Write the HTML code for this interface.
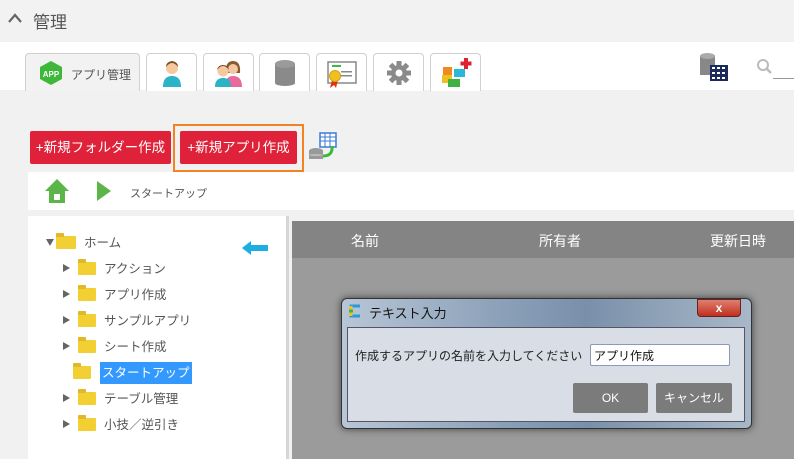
<!DOCTYPE html>
<html><head><meta charset="utf-8">
<style>
*{margin:0;padding:0;box-sizing:border-box}
body{width:794px;height:459px;overflow:hidden;background:#f1f1f1;font-family:"Liberation Sans","Noto Sans CJK JP",sans-serif;position:relative;color:#444}
.abs{position:absolute}
.tab{position:absolute;top:53px;height:38px;border:1px solid #d0d0d0;border-bottom:none;border-radius:4px 4px 0 0;background:#fff}
.btn{position:absolute;top:131px;height:33px;background:#df2239;color:#fff;font-size:13.5px;line-height:33px;text-align:center;border-radius:2px}
.tree div{position:absolute;font-size:12.5px;color:#555;height:20px;line-height:20px}
.fold{display:inline-block;width:18px;height:13px;background:#f2cf33;border-radius:1px;vertical-align:-2px;margin-right:8px;position:relative}
.fold:before{content:"";position:absolute;left:0;top:-3px;width:8px;height:4px;background:#e0b828;border-radius:1px 1px 0 0}
.tri{display:inline-block;width:0;height:0;border-left:7px solid #666;border-top:4px solid transparent;border-bottom:4px solid transparent;margin-right:8px;vertical-align:1px}
</style></head><body>
<div class="abs" style="left:0;top:0;width:794px;height:42px;background:#f2f2f2"></div>
<svg class="abs" style="left:7px;top:12px" width="16" height="12"><path d="M2 10 L8 3 L14 10" stroke="#666" stroke-width="2.2" fill="none"/></svg>
<div class="abs" style="left:33px;top:8px;font-size:17px;color:#555">管理</div>
<div class="abs" style="left:0;top:42px;width:794px;height:48px;background:#fff"></div>
<div class="tab" style="left:25px;width:115px;background:#f2f2f2"></div>
<svg class="abs" style="left:39px;top:60px" width="24" height="26"><polygon points="12,1 23,7 23,19 12,25 1,19 1,7" fill="#3db83a"/><text x="12" y="17" font-size="8" font-weight="bold" fill="#fff" text-anchor="middle" font-family="Liberation Sans">APP</text></svg>
<div class="abs" style="left:71px;top:66px;font-size:12px;color:#555">アプリ管理</div>
<div class="tab" style="left:146px;width:51px"></div>
<svg class="abs" style="left:160px;top:59px" width="24" height="28"><circle cx="12" cy="9" r="6" fill="#f6c8a0"/><path d="M6 8 Q12 0 18 8 Q18 3 12 2 Q6 3 6 8Z" fill="#7a4a20"/><path d="M3 28 Q3 17 12 17 Q21 17 21 28Z" fill="#2bb3c8"/></svg>
<div class="tab" style="left:203px;width:51px"></div>
<svg class="abs" style="left:213px;top:59px" width="32" height="28"><path d="M13 14 Q12 2 20 2 Q28 2 27 14Z" fill="#8a5a30"/><circle cx="20" cy="10" r="5" fill="#f6c8a0"/><path d="M12 28 Q12 17 20 17 Q29 17 29 28Z" fill="#e86a9a"/><circle cx="10" cy="12" r="5.5" fill="#f6c8a0"/><path d="M4 11 Q10 3 16 11 Q15 6 10 6 Q5 6 4 11Z" fill="#7a4a20"/><path d="M2 28 Q2 19 10 19 Q18 19 18 28Z" fill="#2bb3c8"/></svg>
<div class="tab" style="left:259px;width:51px"></div>
<svg class="abs" style="left:274px;top:60px" width="22" height="26"><rect x="1" y="4" width="20" height="19" fill="#8a8a8a"/><ellipse cx="11" cy="4" rx="10" ry="4" fill="#9a9a9a"/><ellipse cx="11" cy="23" rx="10" ry="3" fill="#8a8a8a"/></svg>
<div class="tab" style="left:316px;width:51px"></div>
<svg class="abs" style="left:327px;top:60px" width="30" height="28"><rect x="1" y="2" width="28" height="21" fill="#fff" stroke="#888" stroke-width="1.5"/><rect x="5" y="5" width="9" height="2" fill="#3dbb3a"/><rect x="14" y="11" width="11" height="1.5" fill="#888"/><rect x="14" y="15" width="11" height="1.5" fill="#888"/><path d="M5 20 L3 28 L7 25 L9 28 L11 20Z" fill="#d31"/><circle cx="8" cy="16" r="5.5" fill="#f0c020" stroke="#d8a010"/></svg>
<div class="tab" style="left:373px;width:51px"></div>
<svg class="abs" style="left:386px;top:60px" width="26" height="26" viewBox="0 0 26 26"><g fill="#8a8a8a"><circle cx="13" cy="13" r="8"/><rect x="10.5" y="1" width="5" height="24"/><rect x="1" y="10.5" width="24" height="5"/><rect x="10.5" y="1" width="5" height="24" transform="rotate(45 13 13)"/><rect x="10.5" y="1" width="5" height="24" transform="rotate(-45 13 13)"/></g><circle cx="13" cy="13" r="3.5" fill="#fff"/></svg>
<div class="tab" style="left:430px;width:51px"></div>
<svg class="abs" style="left:440px;top:57px" width="34" height="32"><rect x="24" y="1" width="4" height="11" fill="#e02030"/><rect x="20.5" y="4.5" width="11" height="4" fill="#e02030"/><rect x="3" y="10" width="9" height="8" fill="#f08a20"/><rect x="14" y="12" width="11" height="8" fill="#2ab8d8"/><rect x="2" y="18" width="10" height="8" fill="#f0c020"/><rect x="8" y="22" width="12" height="8" fill="#40b040"/></svg>
<svg class="abs" style="left:699px;top:52px" width="32" height="30"><rect x="1" y="4" width="15" height="19" fill="#888"/><ellipse cx="8.5" cy="4" rx="7.5" ry="3" fill="#aaa"/><rect x="11" y="13" width="18" height="16" fill="#1a2a5a"/><g fill="#fff"><rect x="13" y="15" width="3" height="2"/><rect x="18" y="15" width="3" height="2"/><rect x="23" y="15" width="3" height="2"/><rect x="13" y="20" width="3" height="2"/><rect x="18" y="20" width="3" height="2"/><rect x="23" y="20" width="3" height="2"/><rect x="13" y="25" width="3" height="2"/><rect x="18" y="25" width="3" height="2"/><rect x="23" y="25" width="3" height="2"/></g></svg>
<svg class="abs" style="left:756px;top:58px" width="18" height="18"><circle cx="7" cy="7" r="5" fill="none" stroke="#bbb" stroke-width="2"/><path d="M10.5 10.5 L15 15" stroke="#bbb" stroke-width="2.5"/></svg>
<div class="abs" style="left:773px;top:78px;width:21px;height:1px;background:#999"></div>
<div class="btn" style="left:30px;width:141px">+新規フォルダー作成</div>
<div class="abs" style="left:173px;top:124px;width:131px;height:48px;border:2px solid #f58220"></div>
<div class="btn" style="left:180px;width:117px">+新規アプリ作成</div>
<svg class="abs" style="left:307px;top:132px" width="32" height="30"><rect x="13" y="1" width="16" height="14" fill="#fff" stroke="#3a7ad8" stroke-width="1.5"/><path d="M13 5 H29 M13 9 H29 M18 1 V15 M23 1 V15" stroke="#3a7ad8"/><ellipse cx="9" cy="19" rx="7" ry="3" fill="#999"/><rect x="2" y="19" width="14" height="8" fill="#999"/><ellipse cx="9" cy="23" rx="7" ry="1" fill="#bbb"/><path d="M16 24 Q26 24 25 14" stroke="#3db83a" stroke-width="3" fill="none"/></svg>
<div class="abs" style="left:28px;top:172px;width:766px;height:38px;background:#fff"></div>
<svg class="abs" style="left:44px;top:178px" width="26" height="26"><polygon points="13,1 25,13 21,13 21,25 5,25 5,13 1,13" fill="#5cb548"/><rect x="10" y="16" width="6" height="6" fill="#fff"/></svg>
<svg class="abs" style="left:96px;top:180px" width="16" height="22"><polygon points="1,1 15,11 1,21" fill="#5cb548"/></svg>
<div class="abs" style="left:130px;top:185px;font-size:11px;color:#555">スタートアップ</div>
<div class="abs" style="left:28px;top:216px;width:258px;height:243px;background:#fff"></div>
<div class="abs" style="left:286px;top:216px;width:3px;height:243px;background:#d6d6d6"></div>
<div class="tree">
<div style="left:46px;top:233px"><span class="tri" style="border-left:4px solid transparent;border-right:4px solid transparent;border-top:7px solid #666;border-bottom:none;margin-right:2px"></span><span class="fold" style="width:20px;height:13px"></span>ホーム</div>
<div style="left:63px;top:259px"><span class="tri"></span><span class="fold"></span>アクション</div>
<div style="left:63px;top:285px"><span class="tri"></span><span class="fold"></span>アプリ作成</div>
<div style="left:63px;top:311px"><span class="tri"></span><span class="fold"></span>サンプルアプリ</div>
<div style="left:63px;top:337px"><span class="tri"></span><span class="fold"></span>シート作成</div>
<div style="left:73px;top:362px"><span class="fold" style="margin-right:9px"></span><span style="background:#3399ff;color:#fff;padding:2px 2px;display:inline-block;line-height:18px">スタートアップ</span></div>
<div style="left:63px;top:389px"><span class="tri"></span><span class="fold"></span>テーブル管理</div>
<div style="left:63px;top:415px"><span class="tri"></span><span class="fold"></span>小技／逆引き</div>
</div>
<svg class="abs" style="left:241px;top:240px" width="28" height="16"><polygon points="1,8 10,1 10,5 27,5 27,11 10,11 10,15" fill="#1eaee3"/></svg>
<div class="abs" style="left:292px;top:221px;width:502px;height:238px;background:#9b9b9b"></div>
<div class="abs" style="left:292px;top:221px;width:502px;height:37px;background:#848484;color:#fff;font-size:14px">
<span class="abs" style="left:59px;top:10px">名前</span><span class="abs" style="left:247px;top:10px">所有者</span><span class="abs" style="left:418px;top:10px">更新日時</span></div>
<div class="abs" style="left:341px;top:298px;width:411px;height:131px;border-radius:6px;background:linear-gradient(90deg,#b8c6d6,#8a9fb8 40%,#7a90aa 60%,#a8b8c8);border:1px solid #333;box-shadow:0 0 8px rgba(0,0,0,.6)"></div>
<svg class="abs" style="left:348px;top:304px" width="14" height="14"><path d="M12 2 H3 V12 H12" stroke="#2a9ad8" stroke-width="3" fill="none"/><path d="M3 2 V12" stroke="#f0c020" stroke-width="3"/><path d="M1 7 H5" stroke="#3db83a" stroke-width="3"/></svg>
<div class="abs" style="left:369px;top:303px;font-size:13px;color:#111">テキスト入力</div>
<div class="abs" style="left:697px;top:299px;width:44px;height:18px;background:linear-gradient(#e08070,#c03020);border:1px solid #622;border-radius:0 0 4px 4px;color:#fff;font-weight:bold;font-size:12px;text-align:center;line-height:16px">x</div>
<div class="abs" style="left:347px;top:327px;width:398px;height:95px;background:#d8dde6;border:1px solid #556"></div>
<div class="abs" style="left:355px;top:347px;font-size:12px;color:#222">作成するアプリの名前を入力してください</div>
<div class="abs" style="left:590px;top:344px;width:140px;height:22px;background:#fff;border:1px solid #8a9ab8;border-radius:2px;font-size:12px;color:#111;padding:2px 3px">アプリ作成</div>
<div class="abs" style="left:573px;top:383px;width:75px;height:30px;background:#7b7b7b;border-radius:2px;color:#fff;font-size:12px;text-align:center;line-height:30px">OK</div>
<div class="abs" style="left:656px;top:383px;width:76px;height:30px;background:#7b7b7b;border-radius:2px;color:#fff;font-size:12px;text-align:center;line-height:30px">キャンセル</div>
</body></html>
